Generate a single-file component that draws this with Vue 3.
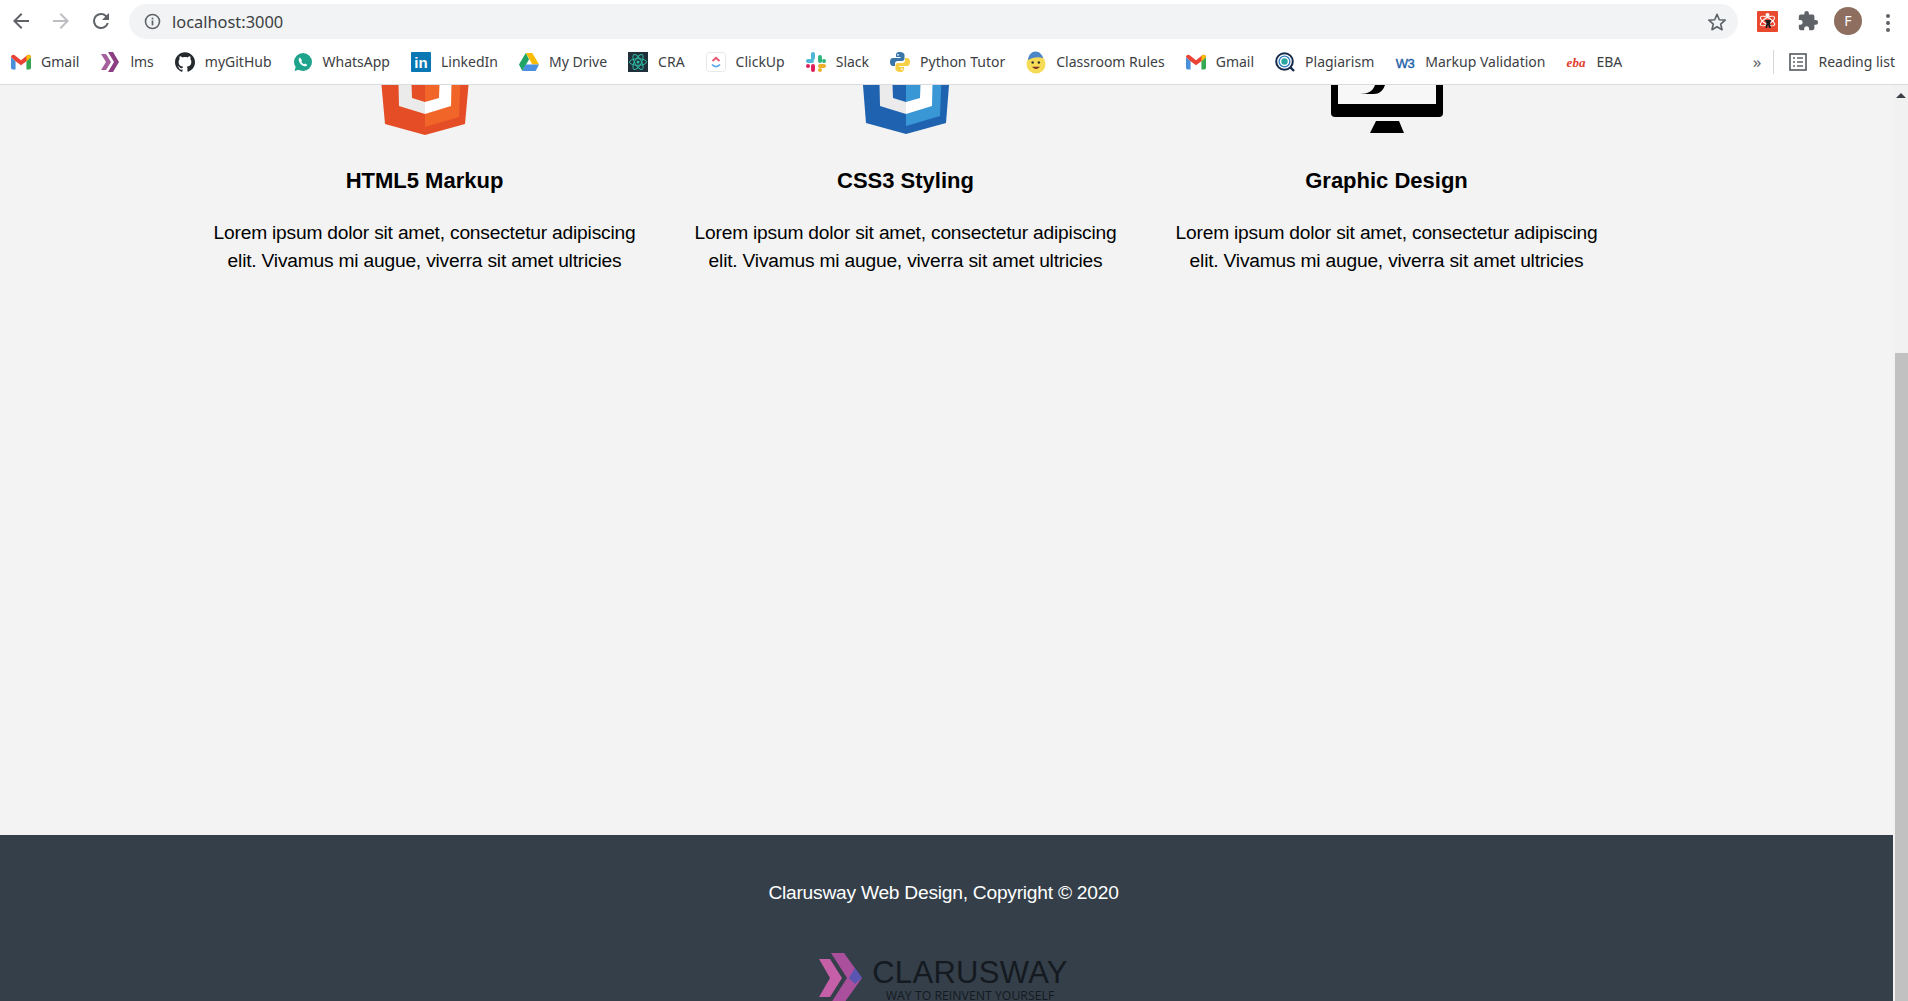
<template>
  <div class="window">
    <header class="chrome">
      <div class="toolbar">
        <svg class="nav back" viewBox="0 0 24 24"><path d="M20 11H7.800l5.600-5.600L12 4l-8 8 8 8 1.400-1.400L7.800 13H20z" /></svg>
        <svg class="nav forward" viewBox="0 0 24 24"><path d="M4 11h12.200l-5.600-5.600L12 4l8 8-8 8-1.400-1.400 5.600-5.600H4z" /></svg>
        <svg class="nav reload" viewBox="0 0 24 24"><path d="M17.650 6.350A7.960 7.960 0 0 0 12 4a8 8 0 1 0 7.730 10h-2.080A6 6 0 1 1 12 6c1.660 0 3.140.69 4.220 1.780L13 11h7V4z" /></svg>
        <div class="omnibox">
          <svg class="info" viewBox="0 0 16 16">
            <circle cx="8" cy="8" r="6.600" fill="none" stroke="#5f6368" stroke-width="1.500" />
            <rect x="7.200" y="7" width="1.600" height="4.600" fill="#5f6368" />
            <rect x="7.200" y="4.400" width="1.600" height="1.600" fill="#5f6368" />
          </svg>
          <span class="url">localhost:3000</span>
          <svg class="star" viewBox="0 0 24 24"><path d="M12 3.600l2.500 5.900 6.400.5-4.900 4.200 1.500 6.200-5.500-3.300-5.500 3.300 1.500-6.200L3.100 10l6.400-.5z" fill="none" stroke="#5f6368" stroke-width="1.800" stroke-linejoin="round" /></svg>
        </div>
        <svg class="ext" viewBox="0 0 21 21">
          <rect width="21" height="21" rx="1" fill="#e8492f" />
          <ellipse cx="10.500" cy="10" rx="8" ry="3.200" fill="none" stroke="#fff" stroke-width="1" transform="rotate(30 10.500 10)" />
          <ellipse cx="10.500" cy="10" rx="8" ry="3.200" fill="none" stroke="#fff" stroke-width="1" transform="rotate(-30 10.500 10)" />
          <circle cx="10.500" cy="4" r="2" fill="#fff" />
          <path d="M8 9h6l-1 4 1 4h-2l-1-3-1 3H8.500l1-5z" fill="#1c1c1c" />
        </svg>
        <svg class="puzzle" viewBox="0 0 24 24"><path d="M20.500 11H19V7a2 2 0 0 0-2-2h-4V3.500a2.500 2.500 0 0 0-5 0V5H4a2 2 0 0 0-2 2v3.800h1.500a2.700 2.700 0 0 1 0 5.400H2V20a2 2 0 0 0 2 2h3.800v-1.500a2.700 2.700 0 0 1 5.400 0V22H17a2 2 0 0 0 2-2v-4h1.500a2.500 2.500 0 0 0 0-5z" fill="#5f6368" /></svg>
        <div class="avatar">F</div>
        <div class="dots"><i></i><i></i><i></i></div>
      </div>
      <div class="bookmarks">
        <div class="bm">
          <svg viewBox="0 0 24 18"><path d="M0 3v13a2 2 0 0 0 2 2h3.500V8z" fill="#4a90d9" /><path d="M24 3v13a2 2 0 0 1-2 2h-3.500V8z" fill="#34a853" /><path d="M0 3l5.500 5L12 13l6.500-5L24 3a2.800 2.800 0 0 0-4.500-2L12 6.800 4.500 1A2.800 2.800 0 0 0 0 3z" fill="#ea4335" /><path d="M18.500 8L24 3a2.800 2.800 0 0 0-4.500-2L18.500 2z" fill="#fbbc04" /></svg>
          <span>Gmail</span>
        </div>
        <div class="bm">
          <svg viewBox="0 0 20 20"><path d="M1 2h5l5 8-5 8H1l5-8z" fill="#a4609b" /><path d="M8 0h5l6 10-6 10H8l6-10z" fill="#8b3f82" /></svg>
          <span>lms</span>
        </div>
        <div class="bm">
          <svg viewBox="0 0 24 24"><path d="M12 .297c-6.630 0-12 5.373-12 12 0 5.303 3.438 9.800 8.205 11.385.6.113.82-.258.82-.577 0-.285-.01-1.040-.015-2.040-3.338.724-4.042-1.610-4.042-1.610C4.422 18.070 3.633 17.700 3.633 17.700c-1.087-.744.084-.729.084-.729 1.205.084 1.838 1.236 1.838 1.236 1.070 1.835 2.809 1.305 3.495.998.108-.776.417-1.305.76-1.605-2.665-.3-5.466-1.332-5.466-5.930 0-1.310.465-2.380 1.235-3.220-.135-.303-.54-1.523.105-3.176 0 0 1.005-.322 3.300 1.230.96-.267 1.980-.399 3-.405 1.020.006 2.040.138 3 .405 2.280-1.552 3.285-1.230 3.285-1.230.645 1.653.24 2.873.12 3.176.765.84 1.230 1.910 1.230 3.220 0 4.610-2.805 5.625-5.475 5.920.42.36.81 1.096.81 2.220 0 1.606-.015 2.896-.015 3.286 0 .315.21.69.825.57C20.565 22.092 24 17.592 24 12.297c0-6.627-5.373-12-12-12" fill="#24292e" /></svg>
          <span>myGitHub</span>
        </div>
        <div class="bm">
          <svg viewBox="0 0 20 20"><circle cx="10" cy="10" r="9" fill="#1fa38c" /><path d="M1.500 19l1.500-5 3.500 3.500z" fill="#1fa38c" /><path d="M7 5.500c-1 .4-1.500 1.400-1.300 2.800.5 3 3 5.400 5.800 6 1.300.2 2.300-.3 2.800-1.300l-2.100-1.600-1.100.8c-1.200-.5-2.200-1.500-2.800-2.800l.8-1z" fill="#fff" /></svg>
          <span>WhatsApp</span>
        </div>
        <div class="bm">
          <svg viewBox="0 0 20 20"><rect width="20" height="20" rx="1" fill="#0a77b5" /><text x="10" y="16" text-anchor="middle" font-family="Liberation Sans, sans-serif" font-weight="700" font-size="15" fill="#fff">in</text></svg>
          <span>LinkedIn</span>
        </div>
        <div class="bm">
          <svg viewBox="0 0 20 18"><path d="M6.700 0h6.600l6.700 11.500h-6.600z" fill="#fbbc04" /><path d="M6.700 0L0 11.500 3.300 18l6.700-11.500z" fill="#1fa463" /><path d="M3.300 18h13.400l3.300-6.500H6.700z" fill="#4a90e2" /></svg>
          <span>My Drive</span>
        </div>
        <div class="bm">
          <svg viewBox="0 0 20 20">
            <rect width="20" height="20" fill="#20303a" />
            <g fill="none" stroke="#2fb7a0" stroke-width="1">
              <ellipse cx="10" cy="10" rx="8.500" ry="3.300" />
              <ellipse cx="10" cy="10" rx="8.500" ry="3.300" transform="rotate(60 10 10)" />
              <ellipse cx="10" cy="10" rx="8.500" ry="3.300" transform="rotate(-60 10 10)" />
            </g>
            <circle cx="10" cy="10" r="1.600" fill="#2fb7a0" />
          </svg>
          <span>CRA</span>
        </div>
        <div class="bm">
          <svg viewBox="0 0 20 20">
            <rect x=".5" y=".5" width="19" height="19" rx="3" fill="#fff" stroke="#e8e8e8" />
            <path d="M6.500 9L10 5.800 13.500 9" fill="none" stroke="#e8566c" stroke-width="1.800" />
            <path d="M6 12.500c2.400 2.700 5.600 2.700 8 0" fill="none" stroke="#58a6ea" stroke-width="1.800" />
          </svg>
          <span>ClickUp</span>
        </div>
        <div class="bm">
          <svg viewBox="0 0 20 20">
            <rect x="5" y="0" width="4" height="8" rx="2" fill="#4fb6d8" /><rect x="0" y="7" width="8" height="4" rx="2" fill="#4fb6d8" />
            <rect x="12" y="3" width="4" height="8" rx="2" fill="#2eb67d" /><rect x="16" y="7" width="4" height="4" rx="2" fill="#2eb67d" />
            <rect x="12" y="12" width="8" height="4" rx="2" fill="#ecb22e" /><rect x="12" y="16" width="4" height="4" rx="2" fill="#ecb22e" />
            <rect x="5" y="12" width="4" height="8" rx="2" fill="#e01e5a" /><rect x="0" y="12" width="4" height="4" rx="2" fill="#e01e5a" />
          </svg>
          <span>Slack</span>
        </div>
        <div class="bm">
          <svg viewBox="0 0 20 20">
            <path d="M10 0C6.500 0 6 1.500 6 3v2h4.500v1H3C1 6 0 7.500 0 10s1 4 3 4h2v-2.500C5 9.800 6.300 9 8 9h4c1.500 0 2.500-1 2.500-2.500V3c0-1.600-1.600-3-4.500-3z" fill="#3a76a8" />
            <path d="M10 20c3.500 0 4-1.500 4-3v-2H9.500v-1H17c2 0 3-1.500 3-4s-1-4-3-4h-2v2.500c0 1.700-1.300 2.500-3 2.500H8c-1.500 0-2.500 1-2.500 2.500V17c0 1.600 1.600 3 4.500 3z" fill="#f7cf45" />
            <circle cx="8" cy="2.800" r=".9" fill="#fff" /><circle cx="12" cy="17.200" r=".9" fill="#fff" />
          </svg>
          <span>Python Tutor</span>
        </div>
        <div class="bm">
          <svg class="tall" viewBox="0 0 21 24">
            <circle cx="10.500" cy="14" r="10" fill="#f6dc56" />
            <path d="M2 10c1-6 4-9 8-9 4 0 7 3 8 7-5-2-11-1-16 2z" fill="#4c86c6" />
            <circle cx="7" cy="12.500" r="1.300" fill="#333" /><circle cx="13.500" cy="12.500" r="1.300" fill="#333" />
            <path d="M6.500 17c2 3 6 3 8 0z" fill="#7a2d20" />
          </svg>
          <span>Classroom Rules</span>
        </div>
        <div class="bm">
          <svg viewBox="0 0 24 18"><path d="M0 3v13a2 2 0 0 0 2 2h3.500V8z" fill="#4a90d9" /><path d="M24 3v13a2 2 0 0 1-2 2h-3.500V8z" fill="#34a853" /><path d="M0 3l5.500 5L12 13l6.500-5L24 3a2.800 2.800 0 0 0-4.500-2L12 6.800 4.500 1A2.800 2.800 0 0 0 0 3z" fill="#ea4335" /><path d="M18.500 8L24 3a2.800 2.800 0 0 0-4.500-2L18.500 2z" fill="#fbbc04" /></svg>
          <span>Gmail</span>
        </div>
        <div class="bm">
          <svg viewBox="0 0 20 20">
            <circle cx="9.500" cy="9.500" r="8.300" fill="#fff" stroke="#172b4d" stroke-width="2" />
            <circle cx="9.500" cy="9.500" r="5.400" fill="none" stroke="#2d7ec2" stroke-width="1.300" />
            <circle cx="9.500" cy="9.500" r="3.200" fill="#2ba6a0" />
            <path d="M15 15l4 4" stroke="#172b4d" stroke-width="2.400" />
          </svg>
          <span>Plagiarism</span>
        </div>
        <div class="bm">
          <svg viewBox="0 0 20 20"><text x="10" y="15.500" text-anchor="middle" font-family="Liberation Sans, sans-serif" font-size="13" letter-spacing="-.6" fill="#1d5fa8" stroke="#1d5fa8" stroke-width=".4">W3</text></svg>
          <span>Markup Validation</span>
        </div>
        <div class="bm">
          <svg viewBox="0 0 20 20"><text x="10" y="14.500" text-anchor="middle" font-family="Liberation Serif, serif" font-style="italic" font-weight="700" font-size="13" fill="#e2402e">eba</text></svg>
          <span>EBA</span>
        </div>
        <div class="more">»</div>
        <div class="divider"></div>
        <div class="reading">
          <svg viewBox="0 0 18 18">
            <rect x="1" y="1" width="16" height="16" fill="none" stroke="#5f6368" stroke-width="1.700" />
            <path d="M4 5h2M8 5h6M4 9h2M8 9h6M4 13h2M8 13h6" stroke="#5f6368" stroke-width="1.500" />
          </svg>
          <span>Reading list</span>
        </div>
      </div>
    </header>

    <div class="viewport">
      <main class="page">
        <section class="features">
          <article class="feature">
            <svg class="feature-icon" viewBox="0 0 100 100">
              <path d="M2 0h96l-8 89-40 11-40-11z" fill="#e44d26" />
              <path d="M50 8h37l-3 74-34 10z" fill="#f16529" />
              <path d="M23 25h27v11H36l1 27 13 4v12l-26-8z" fill="#ebebeb" />
              <path d="M77 25H50v11h15l-1 27-14 4v12l26-8z" fill="#fff" />
            </svg>
            <h3>HTML5 Markup</h3>
            <p>Lorem ipsum dolor sit amet, consectetur adipiscing elit. Vivamus mi augue, viverra sit amet ultricies</p>
          </article>
          <article class="feature">
            <svg class="feature-icon" viewBox="0 0 100 100">
              <path d="M3 0h94l-7 88-40 11-40-11z" fill="#1f62b0" />
              <path d="M50 8h37l-3 73-34 10z" fill="#3a97d6" />
              <path d="M23 25h27v11H36l1 27 13 4v12l-26-8z" fill="#ebebeb" />
              <path d="M77 25H50v11h15l-1 27-14 4v12l26-8z" fill="#fff" />
            </svg>
            <h3>CSS3 Styling</h3>
            <p>Lorem ipsum dolor sit amet, consectetur adipiscing elit. Vivamus mi augue, viverra sit amet ultricies</p>
          </article>
          <article class="feature">
            <svg class="feature-icon" viewBox="0 0 114 100">
              <path d="M5 0h104a4 4 0 0 1 4 4v74a4 4 0 0 1-4 4H5a4 4 0 0 1-4-4V4a4 4 0 0 1 4-4z" fill="#000" />
              <rect x="8" y="7" width="98" height="62" fill="#f7f7f7" />
              <path d="M30 59c8 0 13-3 15-9h10c-2 6-6 9-11 9z" fill="#000" />
              <path d="M46 86h23l5 12H40z" fill="#000" />
            </svg>
            <h3>Graphic Design</h3>
            <p>Lorem ipsum dolor sit amet, consectetur adipiscing elit. Vivamus mi augue, viverra sit amet ultricies</p>
          </article>
        </section>
        <footer class="footer">
          <p class="copyright">Clarusway Web Design, Copyright © 2020</p>
          <div class="logo">
            <svg class="logo-mark" viewBox="0 0 44 50">
              <path d="M0 6h11l12 19-12 19H0l11-19z" fill="#c560a8" />
              <path d="M12 0h13l18 25-18 25H12l16-25z" fill="#a94f9b" />
              <path d="M36 15l7 10-7 6-6-6z" fill="#5a55b0" />
            </svg>
            <div class="logo-text">
              <div class="logo-name">CLARUSWAY</div>
              <div class="logo-tag">WAY TO REINVENT YOURSELF</div>
            </div>
          </div>
        </footer>
      </main>
      <aside class="scrollbar">
        <div class="arrow"></div>
        <div class="thumb"></div>
      </aside>
    </div>
  </div>
</template>

<script setup>
</script>

<style>
html,
body {
  margin: 0;
  overflow: hidden;
}
</style>

<style scoped>
.window {
  width: 1908px;
  height: 1001px;
  display: flex;
  flex-direction: column;
  overflow: hidden;
  font-family: "Liberation Sans", Arial, sans-serif;
  background: #f3f3f3;
}

.chrome {
  flex: none;
  height: 84px;
  background: #fff;
  border-bottom: 1px solid #d9dbdf;
  box-sizing: content-box;
}

.toolbar {
  height: 43px;
  display: flex;
  align-items: flex-start;
}

.nav {
  width: 24px;
  height: 24px;
  margin-top: 9px;
  fill: #5f6368;
  flex: none;
}

.back {
  margin-left: 9px;
}

.forward {
  margin-left: 16px;
  fill: #bcbec1;
}

.reload {
  margin-left: 16px;
}

.omnibox {
  margin: 4px 0 0 16px;
  width: 1609px;
  height: 35px;
  border-radius: 18px;
  background: #f1f3f4;
  display: flex;
  align-items: center;
  flex: none;
}

.info {
  width: 17px;
  height: 17px;
  margin-left: 15px;
}

.url {
  margin-left: 11px;
  font-family: "Noto Sans", sans-serif;
  font-size: 16.4px;
  color: #3c4043;
}

.star {
  width: 22px;
  height: 22px;
  margin-left: auto;
  margin-right: 10px;
}

.ext {
  width: 21px;
  height: 21px;
  margin: 11px 0 0 19px;
  flex: none;
}

.puzzle {
  width: 22px;
  height: 22px;
  margin: 10px 0 0 19px;
  flex: none;
}

.avatar {
  width: 28px;
  height: 28px;
  margin: 7px 0 0 15px;
  border-radius: 50%;
  background: #8d6e5f;
  color: #fff;
  font-family: "Noto Sans", sans-serif;
  font-size: 14px;
  line-height: 28px;
  text-align: center;
  flex: none;
}

.dots {
  margin: 14px 0 0 24px;
  display: flex;
  flex-direction: column;
  gap: 3px;
}

.dots i {
  display: block;
  width: 4px;
  height: 4px;
  border-radius: 50%;
  background: #5f6368;
}

.bookmarks {
  height: 37px;
  display: flex;
  align-items: center;
  gap: 21px;
  padding-left: 11px;
  font-family: "Noto Sans", sans-serif;
  font-size: 14px;
  color: #3c4043;
}

.bm {
  display: flex;
  align-items: center;
  gap: 10px;
  flex: none;
}

.bm svg {
  width: 20px;
  height: 20px;
  flex: none;
}

.bm svg.tall {
  height: 24px;
}

.more {
  margin-left: auto;
  margin-right: -9px;
  font-size: 17px;
  color: #5f6368;
}

.divider {
  width: 1px;
  height: 24px;
  background: #d5d7da;
}

.reading {
  display: flex;
  align-items: center;
  gap: 11px;
  margin-left: -6px;
  margin-right: 13px;
}

.reading svg {
  width: 18px;
  height: 18px;
}

.viewport {
  flex: 1;
  display: flex;
  min-height: 0;
}

.page {
  flex: 1;
  min-width: 0;
  display: flex;
  flex-direction: column;
  overflow: hidden;
  background: #f3f3f3;
}

.features {
  flex: 1;
  margin-top: -50px;
  padding-left: 184px;
  display: grid;
  grid-template-columns: repeat(3, 481px);
  align-content: start;
}

.feature {
  text-align: center;
  color: #000;
}

.feature-icon {
  display: block;
  height: 100px;
  margin: 0 auto;
}

.feature h3 {
  margin: 32px 0 0;
  font-size: 22px;
  line-height: 28px;
  font-weight: 700;
}

.feature p {
  margin: 24px auto 0;
  width: 440px;
  font-size: 19.2px;
  letter-spacing: -0.2px;
  line-height: 28px;
}

.footer {
  flex: none;
  height: 166px;
  overflow: hidden;
  background: #343f4a;
  color: #fff;
  display: flex;
  flex-direction: column;
  align-items: center;
  padding-right: 6px;
}

.copyright {
  margin: 44px 0 0;
  font-size: 19.2px;
  letter-spacing: -0.24px;
  line-height: 28px;
}

.logo {
  margin-top: 46px;
  display: flex;
  align-items: flex-start;
  gap: 9px;
  flex: none;
}

.logo-mark {
  width: 44px;
  height: 50px;
  flex: none;
}

.logo-name {
  margin-top: 4px;
  font-size: 31px;
  letter-spacing: 0.3px;
  line-height: 32px;
  color: #141a20;
}

.logo-tag {
  font-family: "Open Sans", sans-serif;
  font-size: 12.3px;
  line-height: 14px;
  color: #141a20;
  text-align: center;
}

.scrollbar {
  width: 15px;
  flex: none;
  background: #f1f1f1;
  display: flex;
  flex-direction: column;
  align-items: flex-end;
}

.arrow {
  margin: 8px 0 0;
  align-self: center;
  width: 0;
  height: 0;
  border-left: 5px solid transparent;
  border-right: 5px solid transparent;
  border-bottom: 5px solid #3c4048;
}

.thumb {
  margin-top: 255px;
  width: 13px;
  flex: 1;
  background: #c1c1c1;
}
</style>
